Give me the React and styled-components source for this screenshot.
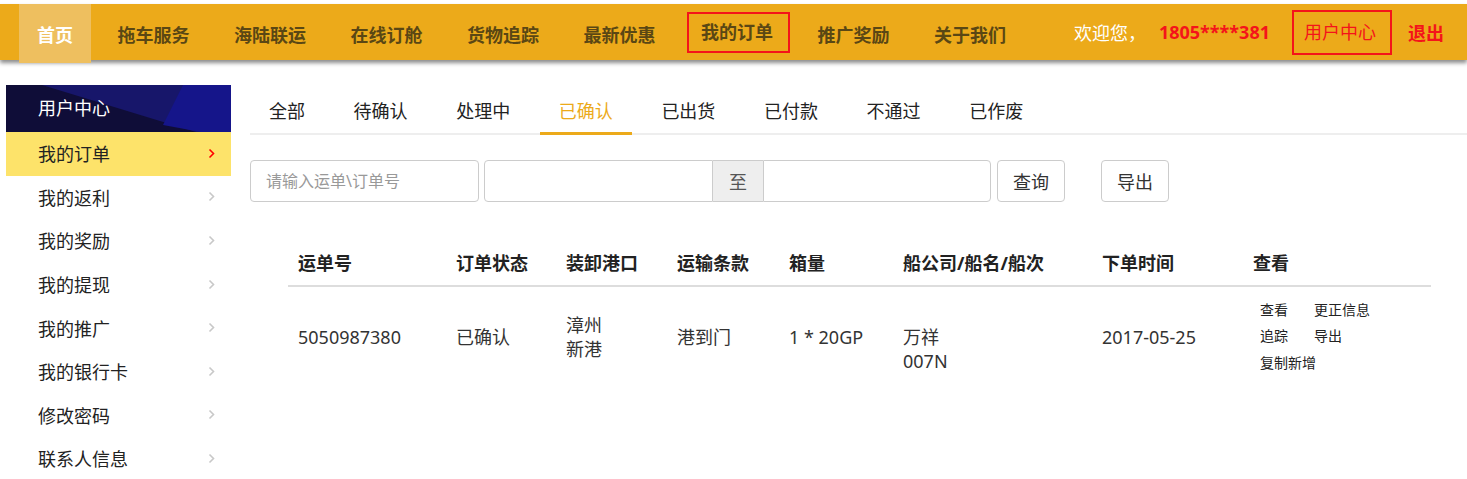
import React from 'react';
import styled, { createGlobalStyle, css } from 'styled-components';

const GlobalStyle = createGlobalStyle`
  body {
    margin: 0;
    background: #fff;
    font-family: 'Noto Sans', 'Noto Sans CJK SC', sans-serif;
    color: #333;
  }
  * { box-sizing: border-box; }
`;

const yellow = '#ecaa1a';
const red = '#f4141a';

const Header = styled.header`
  margin-top: 4px;
  height: 56px;
  background: ${yellow};
  box-shadow: 0 3px 4px rgba(0, 0, 0, 0.45);
  display: flex;
  align-items: flex-start;
  padding: 0 23px 0 19px;
  position: relative;
  z-index: 1;
`;

const Nav = styled.nav`
  display: flex;
  gap: 8.5px;
`;

const NavItem = styled.a`
  height: 59px;
  padding: 0 18px;
  display: flex;
  align-items: center;
  font-size: 18px;
  font-weight: bold;
  color: #5a4714;
  text-decoration: none;
  ${(p) =>
    p.$active &&
    css`
      background: #eebf5f;
      color: #fff;
    `}
  ${(p) =>
    p.$boxed &&
    css`
      padding: 0 1px 0 5px;
      height: 56px;
      span {
        border: 2px solid ${red};
        padding: 0 15px 0 12px;
        line-height: 37px;
      }
    `}
`;

const UserBar = styled.div`
  margin-left: auto;
  height: 56px;
  display: flex;
  align-items: center;
  font-size: 18px;
`;

const Welcome = styled.span`
  color: #fff;
  margin-right: 13px;
`;

const Phone = styled.span`
  color: ${red};
  font-weight: bold;
  margin-right: 22px;
`;

const UserCenter = styled.a`
  color: ${red};
  border: 2px solid ${red};
  padding: 0 14px 0 10px;
  line-height: 41px;
  margin-right: 16px;
  margin-top: 1px;
`;

const Logout = styled.a`
  color: ${red};
  font-weight: bold;
`;

const Body = styled.div`
  display: flex;
  gap: 19px;
  padding-top: 25px;
`;

const Sidebar = styled.aside`
  width: 225px;
  margin-left: 6px;
  flex-shrink: 0;
`;

const SideHead = styled.div`
  position: relative;
  height: 47px;
  background: #0f0d38;
  overflow: hidden;
  display: flex;
  align-items: center;
  padding: 0 0 3px 32px;
  color: #fff;
  font-size: 18px;
  svg {
    position: absolute;
    inset: 0;
  }
  span {
    position: relative;
  }
`;

const SideItem = styled.a`
  height: 43.6px;
  display: flex;
  align-items: center;
  justify-content: space-between;
  padding: 0 16px 1px 32px;
  font-size: 18px;
  color: #222;
  background: ${(p) => (p.$active ? '#fde36a' : 'transparent')};
`;

const Main = styled.main`
  flex: 1;
`;

const Tabs = styled.div`
  display: flex;
  gap: 10.6px;
  border-bottom: 2px solid #eee;
  height: 50px;
`;

const Tab = styled.a`
  padding: 3px 19px 0;
  height: 50px;
  margin-bottom: -2px;
  display: flex;
  align-items: center;
  font-size: 18px;
  color: ${(p) => (p.$active ? yellow : '#222')};
  border-bottom: 3px solid ${(p) => (p.$active ? yellow : 'transparent')};
`;

const SearchRow = styled.div`
  display: flex;
  align-items: center;
  margin-top: 25px;
  height: 42px;
`;

const Input = styled.input`
  height: 42px;
  width: ${(p) => p.$w}px;
  border: 1px solid #ccc;
  border-radius: ${(p) => p.$radius || '4px'};
  padding: 0 15px;
  font-size: 16px;
  font-family: inherit;
  color: #333;
  outline: none;
  &::placeholder {
    color: #999;
  }
`;

const InputGroup = styled.div`
  display: flex;
  margin-left: 5px;
`;

const Addon = styled.span`
  width: 50px;
  height: 42px;
  background: #eee;
  border: 1px solid #ccc;
  border-left: none;
  border-right: none;
  display: flex;
  align-items: center;
  justify-content: center;
  font-size: 18px;
  color: #555;
`;

const Button = styled.button`
  height: 42px;
  padding: 0 15px;
  margin-left: ${(p) => p.$ml}px;
  background: #fff;
  border: 1px solid #ccc;
  border-radius: 4px;
  font-size: 18px;
  font-family: inherit;
  color: #333;
`;

const Table = styled.table`
  margin: 38px 0 0 38px;
  width: 1143px;
  border-collapse: collapse;
  table-layout: fixed;
`;

const Th = styled.th`
  text-align: left;
  font-size: 18px;
  font-weight: bold;
  color: #222;
  height: 46px;
  padding: 0 0 2px 10px;
  border-bottom: 2px solid #ddd;
  width: ${(p) => p.$w}px;
`;

const Td = styled.td`
  font-size: 18px;
  color: #333;
  height: 100px;
  padding: 0 0 0 10px;
  vertical-align: middle;
  line-height: 24px;
`;

const Actions = styled.div`
  display: grid;
  grid-template-columns: 28px auto;
  column-gap: 26px;
  font-size: 14px;
  line-height: 26.5px;
  color: #222;
  padding-left: 7px;
  span:last-child {
    grid-column: 1 / -1;
  }
`;

const Chevron = ({ active }) => (
  <svg width="7" height="11" viewBox="0 0 7 11">
    <path
      d="M1.5 1.5 L5.5 5.5 L1.5 9.5"
      fill="none"
      stroke={active ? '#f00' : '#c8c8c8'}
      strokeWidth="1.6"
    />
  </svg>
);

const navItems = ['拖车服务', '海陆联运', '在线订舱', '货物追踪', '最新优惠'];
const navTail = ['推广奖励', '关于我们'];
const sideItems = ['我的返利', '我的奖励', '我的提现', '我的推广', '我的银行卡', '修改密码', '联系人信息'];
const tabs = ['全部', '待确认', '处理中', '已确认', '已出货', '已付款', '不通过', '已作废'];
const columns = [
  ['运单号', 158],
  ['订单状态', 110],
  ['装卸港口', 111],
  ['运输条款', 112],
  ['箱量', 114],
  ['船公司/船名/船次', 199],
  ['下单时间', 151],
  ['查看', 188],
];

export default function App() {
  return (
    <>
      <GlobalStyle />
      <Header>
        <Nav>
          <NavItem $active>首页</NavItem>
          {navItems.map((n) => (
            <NavItem key={n}>{n}</NavItem>
          ))}
          <NavItem $boxed>
            <span>我的订单</span>
          </NavItem>
          {navTail.map((n) => (
            <NavItem key={n}>{n}</NavItem>
          ))}
        </Nav>
        <UserBar>
          <Welcome>欢迎您，</Welcome>
          <Phone>1805****381</Phone>
          <UserCenter>用户中心</UserCenter>
          <Logout>退出</Logout>
        </UserBar>
      </Header>

      <Body>
        <Sidebar>
          <SideHead>
            <svg width="225" height="47" viewBox="0 0 225 47">
              <polygon points="36,0 225,0 225,47 190,47" fill="#17166a" />
              <polygon points="177,0 225,0 225,47 195,47 157,40" fill="#15158a" />
            </svg>
            <span>用户中心</span>
          </SideHead>
          <SideItem $active>
            我的订单
            <Chevron active />
          </SideItem>
          {sideItems.map((s) => (
            <SideItem key={s}>
              {s}
              <Chevron />
            </SideItem>
          ))}
        </Sidebar>

        <Main>
          <Tabs>
            {tabs.map((t) => (
              <Tab key={t} $active={t === '已确认'}>
                {t}
              </Tab>
            ))}
          </Tabs>

          <SearchRow>
            <Input $w={229} placeholder="请输入运单\订单号" />
            <InputGroup>
              <Input $w={229} $radius="4px 0 0 4px" />
              <Addon>至</Addon>
              <Input $w={228} $radius="0 4px 4px 0" />
            </InputGroup>
            <Button $ml={6}>查询</Button>
            <Button $ml={36}>导出</Button>
          </SearchRow>

          <Table>
            <thead>
              <tr>
                {columns.map(([c, w]) => (
                  <Th key={c} $w={w}>
                    {c}
                  </Th>
                ))}
              </tr>
            </thead>
            <tbody>
              <tr>
                <Td>5050987380</Td>
                <Td>已确认</Td>
                <Td>
                  漳州
                  <br />
                  新港
                </Td>
                <Td>港到门</Td>
                <Td>1 * 20GP</Td>
                <Td>
                  <br />
                  万祥
                  <br />
                  007N
                </Td>
                <Td>2017-05-25</Td>
                <Td>
                  <Actions>
                    <span>查看</span>
                    <span>更正信息</span>
                    <span>追踪</span>
                    <span>导出</span>
                    <span>复制新增</span>
                  </Actions>
                </Td>
              </tr>
            </tbody>
          </Table>
        </Main>
      </Body>
    </>
  );
}
